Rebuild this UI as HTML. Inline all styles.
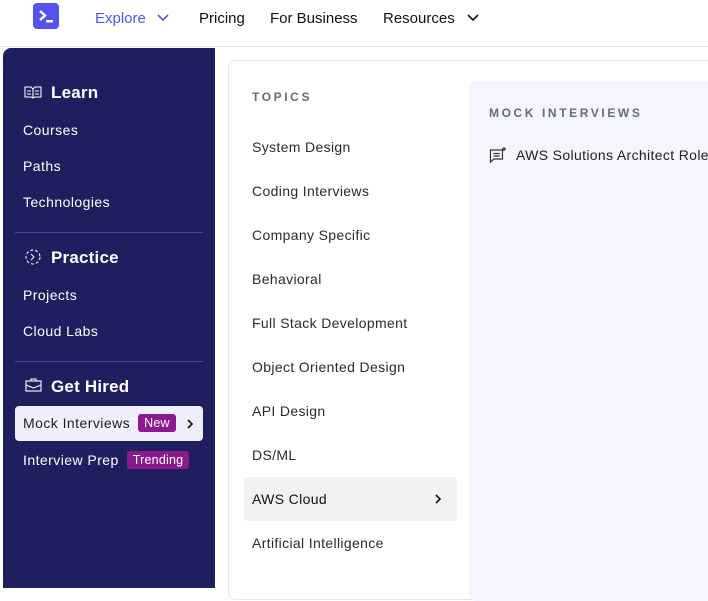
<!DOCTYPE html>
<html><head><style>
*{margin:0;padding:0;box-sizing:border-box}
body{width:708px;height:582px;overflow:hidden;background:#fff;font-family:"Liberation Sans",Arial,sans-serif;position:relative}
.nav{position:absolute;left:0;top:0;width:708px;height:47px;border-bottom:1px solid #e3e3e8;background:#fff}
.logo{position:absolute;left:33px;top:3px;width:26px;height:26px;background:#5553f0;border-radius:4px}
.nav span{position:absolute;top:10px;font-size:15px;color:#111}
.side{position:absolute;left:3px;top:48px;width:212px;height:540px;background:#1f1e5f;border-top-left-radius:8px;color:#fff}
.h{position:absolute;left:48px;font-size:17px;font-weight:bold;letter-spacing:0.2px}
.it{position:absolute;left:20px;font-size:14px;letter-spacing:0.45px}
.hr{position:absolute;left:12px;width:188px;height:1px;background:#4a4a85}
.badge{display:inline-block;background:#8a1a8e;color:#fff;font-size:12.5px;padding:2px 6px;border-radius:3px;margin-left:8px;vertical-align:1px;letter-spacing:0.2px}
.panel{position:absolute;left:228px;top:60px;width:500px;height:540px;border:1px solid #e6e6ea;border-radius:8px;background:#fff}
.t{position:absolute;left:252px;font-size:14px;color:#2a2a33;letter-spacing:0.35px}
.mock{position:absolute;left:469px;top:81px;width:260px;height:520px;background:#f4f5fd;border-radius:8px}
.cap{font-size:12px;font-weight:bold;letter-spacing:2.6px;color:#676b7a;position:absolute}
</style></head><body>
<div class="nav">
<div class="logo"><svg width="26" height="26"><path d="M7 8l5 4.5-5 4.5" stroke="#fff" stroke-width="2.5" fill="none"/><rect x="13" y="17" width="7" height="2.5" fill="#fff"/></svg></div>
<span style="left:95px;color:#5553f0">Explore</span>
<svg style="position:absolute;left:156px;top:13px" width="14" height="10"><path d="M2 2l5 5 5-5" stroke="#5553f0" stroke-width="1.6" fill="none"/></svg>
<span style="left:199px">Pricing</span>
<span style="left:270px">For Business</span>
<span style="left:383px">Resources</span>
<svg style="position:absolute;left:466px;top:13px" width="14" height="10"><path d="M2 2l5 5 5-5" stroke="#111" stroke-width="1.6" fill="none"/></svg>
</div>
<div class="side">
<svg style="position:absolute;left:21px;top:37px" width="18" height="14"><path d="M1 2h6l2 2 2-2h6v10h-6l-2 1-2-1H1z M9 4v9 M3 6h4M3 9h4M11 6h4M11 9h4" stroke="#fff" stroke-width="1.1" fill="none"/></svg>
<div class="h" style="top:35px">Learn</div>
<div class="it" style="top:74px">Courses</div>
<div class="it" style="top:110px">Paths</div>
<div class="it" style="top:146px">Technologies</div>
<div class="hr" style="top:184px"></div>
<svg style="position:absolute;left:21px;top:200px" width="18" height="18"><circle cx="9" cy="9" r="7" stroke="#fff" stroke-width="1" fill="none" stroke-dasharray="3 2"/><path d="M7 6l3 3-3 3" stroke="#fff" fill="none"/></svg>
<div class="h" style="top:200px">Practice</div>
<div class="it" style="top:239px">Projects</div>
<div class="it" style="top:275px">Cloud Labs</div>
<div class="hr" style="top:313px"></div>
<svg style="position:absolute;left:22px;top:330px" width="18" height="14"><rect x="1" y="3" width="15" height="10" stroke="#fff" fill="none" stroke-width="1.1"/><path d="M6 3V1h5v2M1 7l7.5 3 7.5-3" stroke="#fff" fill="none" stroke-width="1.1"/></svg>
<div class="h" style="top:329px">Get Hired</div>
<div style="position:absolute;left:12px;top:358px;width:188px;height:35px;background:#efeffb;border-radius:4px"></div>
<div class="it" style="top:366px;color:#1c1c28">Mock Interviews<span class="badge">New</span></div>
<svg style="position:absolute;left:183px;top:370px" width="10" height="12"><path d="M2 2l4 4-4 4" stroke="#1c1c28" stroke-width="1.8" fill="none"/></svg>
<div class="it" style="top:403px">Interview Prep<span class="badge">Trending</span></div>
</div>
<div class="panel"></div>
<div class="cap" style="left:252px;top:90px">TOPICS</div>
<div class="t" style="top:139px">System Design</div>
<div class="t" style="top:183px">Coding Interviews</div>
<div class="t" style="top:227px">Company Specific</div>
<div class="t" style="top:271px">Behavioral</div>
<div class="t" style="top:315px">Full Stack Development</div>
<div class="t" style="top:359px">Object Oriented Design</div>
<div class="t" style="top:403px">API Design</div>
<div class="t" style="top:447px">DS/ML</div>
<div style="position:absolute;left:244px;top:477px;width:213px;height:44px;background:#f2f2f4;border-radius:4px"></div>
<div class="t" style="top:491px;color:#111">AWS Cloud</div>
<svg style="position:absolute;left:434px;top:493px" width="10" height="12"><path d="M2 2l4 4-4 4" stroke="#111" stroke-width="1.6" fill="none"/></svg>
<div class="t" style="top:535px">Artificial Intelligence</div>
<div class="mock"></div>
<div class="cap" style="left:489px;top:106px">MOCK INTERVIEWS</div>
<svg style="position:absolute;left:489px;top:146px" width="20" height="18"><path d="M1.5 4h12v9H5l-3.5 3z M4.5 7.5h6M4.5 10h6M15 1v4M13 3h4" stroke="#333" stroke-width="1.2" fill="none"/></svg>
<div style="position:absolute;left:516px;top:147px;font-size:14px;color:#222;white-space:nowrap;letter-spacing:0.35px">AWS Solutions Architect Role</div>
</body></html>
